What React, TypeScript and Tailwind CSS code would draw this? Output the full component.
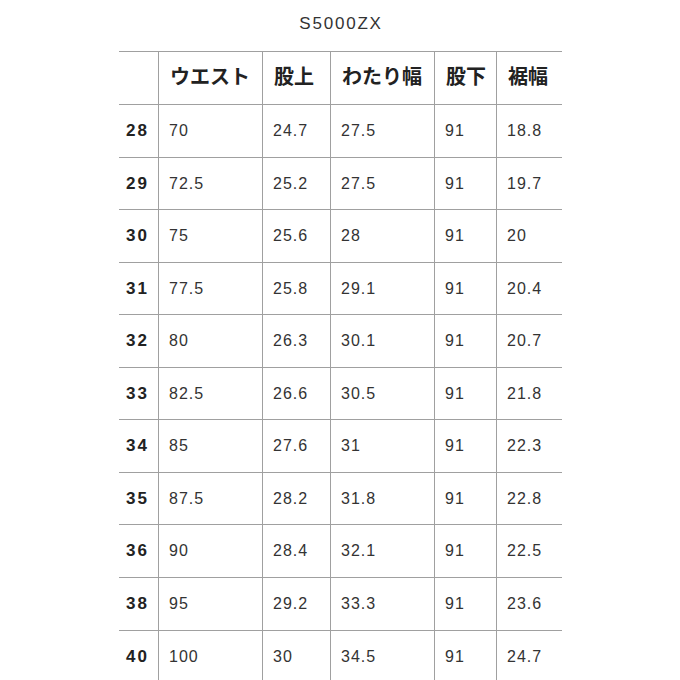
const cols = ["w-[39px]", "w-[104px]", "w-[68px]", "w-[104px]", "w-[62px]", "w-[66px]"];

const headers = ["", "ウエスト", "股上", "わたり幅", "股下", "裾幅"];

const rows: string[][] = [
  ["28", "70", "24.7", "27.5", "91", "18.8"],
  ["29", "72.5", "25.2", "27.5", "91", "19.7"],
  ["30", "75", "25.6", "28", "91", "20"],
  ["31", "77.5", "25.8", "29.1", "91", "20.4"],
  ["32", "80", "26.3", "30.1", "91", "20.7"],
  ["33", "82.5", "26.6", "30.5", "91", "21.8"],
  ["34", "85", "27.6", "31", "91", "22.3"],
  ["35", "87.5", "28.2", "31.8", "91", "22.8"],
  ["36", "90", "28.4", "32.1", "91", "22.5"],
  ["38", "95", "29.2", "33.3", "91", "23.6"],
  ["40", "100", "30", "34.5", "91", "24.7"],
];

const heights = ["h-[53px]", "h-[52px]", "h-[53px]", "h-[52px]", "h-[53px]", "h-[52px]", "h-[53px]", "h-[52px]", "h-[53px]", "h-[53px]", "h-[53px]"];

const font = { fontFamily: '"Liberation Sans", "Noto Sans CJK JP", sans-serif' };

export default function App() {
  return (
    <div className="w-[680px] h-[680px] overflow-hidden bg-white text-[#333]" style={font}>
      <div className="h-[51px] flex items-center justify-center pl-[2px] pb-[3px] text-[17px] tracking-[1.8px] text-[#333]">
        S5000ZX
      </div>
      <div className="ml-[119px] w-[443px]">
        <div className="flex h-[53px] border-t border-[#a0a0a0]">
          {headers.map((h, i) => (
            <div
              key={i}
              className={`${cols[i]} flex items-center pl-[11px] pb-[2px] text-[20px] font-bold text-[#222] ${i > 0 ? "border-l border-[#a0a0a0]" : ""}`}
            >
              {h}
            </div>
          ))}
        </div>
        {rows.map((r, ri) => (
          <div key={ri} className={`flex ${heights[ri]} border-t border-[#a0a0a0]`}>
            {r.map((c, i) => (
              <div
                key={i}
                className={`${cols[i]} flex items-center tracking-[1px] ${
                  i === 0
                    ? "pl-[7px] text-[17px] font-bold text-[#222] tracking-[2px]"
                    : "pl-[10px] text-[16px] border-l border-[#a0a0a0]"
                }`}
              >
                {c}
              </div>
            ))}
          </div>
        ))}
      </div>
    </div>
  );
}
